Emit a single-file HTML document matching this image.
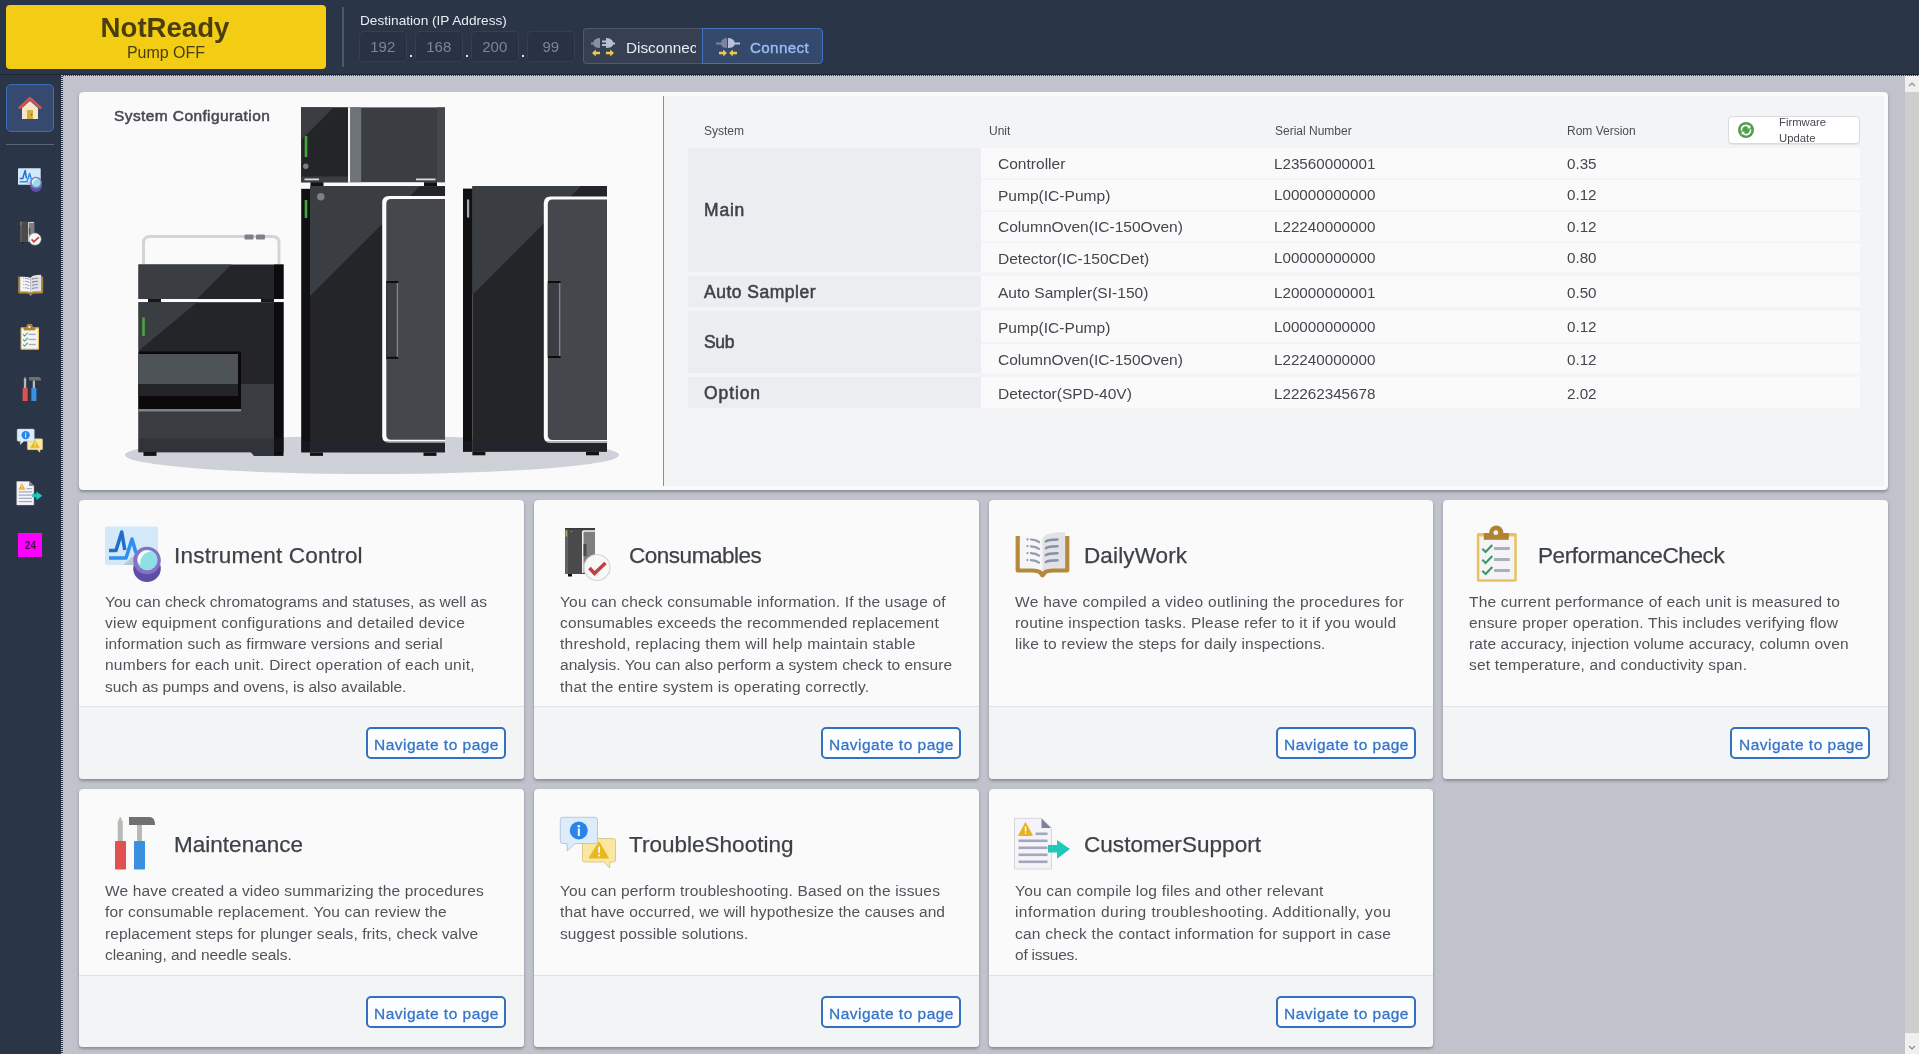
<!DOCTYPE html>
<html><head><meta charset="utf-8"><style>
*{box-sizing:border-box;margin:0;padding:0}
html,body{width:1919px;height:1054px;overflow:hidden;background:#c0c3cc;font-family:"Liberation Sans", sans-serif}
.t{position:absolute;white-space:nowrap;will-change:transform}
.b{position:absolute}
.ic{position:absolute;overflow:visible}
.card{position:absolute;background:#fafafa;border-radius:4px;box-shadow:0 0 0.5px rgba(90,95,105,.5),0 2px 3px rgba(80,85,95,.5);overflow:hidden}
.foot{position:absolute;left:0;right:0;bottom:0;background:#f3f4f6;border-top:1px solid #dfe1e5}
.nav{position:absolute;width:140px;height:32px;border:2px solid #3570c0;border-radius:5px;background:#fcfdff}
</style></head><body>
<div class="b" style="left:0;top:0;width:1919px;height:75px;background:#2a3548"></div>
<div class="b" style="left:0;top:74px;width:1919px;height:1px;background:#1c2431"></div>
<div class="b" style="left:6px;top:5px;width:320px;height:64px;background:#f2cd14;border-radius:4px"></div>
<div class="t" style="left:6px;width:320px;text-align:center;top:11.44px;font-size:27.6px;line-height:33px;font-weight:700;color:#4b3d0c;margin-left:-0.8px">NotReady</div>
<div class="t" style="left:6px;width:320px;text-align:center;top:43.21px;font-size:16px;line-height:19px;color:#4b3d0c">Pump OFF</div>
<div class="b" style="left:342px;top:7px;width:1.5px;height:60px;background:#4d586c"></div>
<div class="t " style="left:359.5px;top:13.08px;font-size:13.65px;line-height:16.38px;color:#e9edf3;font-weight:400;">Destination (IP Address)</div>
<div class="b" style="left:359px;top:31px;width:47.5px;height:31px;border:1px solid #363f51;background:#283244;border-radius:4px"></div>
<div class="t" style="left:359px;width:47.5px;text-align:center;top:38.40px;font-size:15px;line-height:18px;color:#7c8598">192</div>
<div class="b" style="left:415px;top:31px;width:47.5px;height:31px;border:1px solid #363f51;background:#283244;border-radius:4px"></div>
<div class="t" style="left:415px;width:47.5px;text-align:center;top:38.40px;font-size:15px;line-height:18px;color:#7c8598">168</div>
<div class="b" style="left:471px;top:31px;width:47.5px;height:31px;border:1px solid #363f51;background:#283244;border-radius:4px"></div>
<div class="t" style="left:471px;width:47.5px;text-align:center;top:38.40px;font-size:15px;line-height:18px;color:#7c8598">200</div>
<div class="b" style="left:527px;top:31px;width:47.5px;height:31px;border:1px solid #363f51;background:#283244;border-radius:4px"></div>
<div class="t" style="left:527px;width:47.5px;text-align:center;top:38.40px;font-size:15px;line-height:18px;color:#7c8598">99</div>
<div class="b" style="left:409.5px;top:55px;width:2.2px;height:2.2px;background:#dfe3ea"></div>
<div class="b" style="left:465.5px;top:55px;width:2.2px;height:2.2px;background:#dfe3ea"></div>
<div class="b" style="left:521.5px;top:55px;width:2.2px;height:2.2px;background:#dfe3ea"></div>
<div class="b" style="left:583px;top:28px;width:120px;height:35.5px;background:#374052;border:1px solid #4f596b;border-right:none;border-radius:4px 0 0 4px"></div>
<div class="b" style="left:702px;top:28px;width:121px;height:35.5px;background:#34496b;border:1px solid #3f73c2;border-radius:0 4px 4px 0"></div>
<div class="b" style="left:586px;top:30px;width:40px;height:32px;overflow:visible"><svg width="40" height="32" viewBox="0 0 40 32"><path d="M14 8 V18 Q8.5 18 7.3 14.5 H5 V12.5 H7.3 Q8.5 8 14 8 Z" fill="#8a90a4"/><rect x="16" y="10.5" width="4.5" height="2" fill="#b9c0d0"/><rect x="16" y="14" width="4.5" height="2" fill="#b9c0d0"/><path d="M20 8 Q26 8 27.2 12.5 H29 V14.5 H27.2 Q26 18 20 18 Z" fill="#b9c0d0"/><path d="M6 23 L9.8 19.5 V21.8 H14 V24.2 H9.8 V26.5 Z" fill="#f0c850"/><path d="M28 23 L24.2 19.5 V21.8 H20 V24.2 H24.2 V26.5 Z" fill="#f0c850"/></svg></div>
<div class="b" style="left:625.5px;top:30px;width:70px;height:30px;overflow:hidden"><div class="t " style="left:0px;top:9.02px;font-size:15.3px;line-height:18.36px;color:#e9edf4;font-weight:400;">Disconnect</div>
</div>
<div class="b" style="left:708px;top:30px;width:40px;height:32px;overflow:visible"><svg width="40" height="32" viewBox="0 0 40 32"><rect x="8" y="12.5" width="5.5" height="2" fill="#7b83a0"/><path d="M19 8 V18 Q14 18 13 14.5 V12.5 Q14 8 19 8 Z" fill="#7b83a0"/><path d="M20 8 Q25.5 8 26.8 12.5 H32 V14.5 H26.8 Q25.5 18 20 18 Z" fill="#b9c1d9"/><path d="M19 23 L15.2 19.5 V21.8 H11 V24.2 H15.2 V26.5 Z" fill="#f0c850"/><path d="M21 23 L24.8 19.5 V21.8 H29 V24.2 H24.8 V26.5 Z" fill="#f0c850"/></svg></div>
<div class="t " style="left:750px;top:39.11px;font-size:15.2px;line-height:18.24px;color:#98bef5;font-weight:400;letter-spacing:0.35px;-webkit-text-stroke:0.35px #98bef5;">Connect</div>
<div class="b" style="left:0;top:75px;width:62px;height:979px;background:#2a3548"></div>
<div class="b" style="left:61px;top:75px;width:2px;height:979px;background:repeating-linear-gradient(180deg,#c9ccd3 0 1px,#2a3548 1px 2px)"></div>
<div class="b" style="left:62px;top:75px;width:1857px;height:1px;background:repeating-linear-gradient(90deg,#c9ccd3 0 1px,#2a3548 1px 2px)"></div>
<div class="b" style="left:6px;top:84px;width:48px;height:48px;background:#354a6e;border:1px solid #3f6dbd;border-radius:5px"></div>
<svg class="ic" style="left:10px;top:90px" width="40" height="40" viewBox="0 0 40 40"><path d="M12 18 L20 11 L28 18 V29 H12 Z" fill="#f6e7c9"/>
<rect x="17" y="20" width="6" height="9" fill="#d7ae3e"/>
<circle cx="21.6" cy="24.6" r="0.7" fill="#6a5010"/>
<polyline points="9,18.5 20,8.3 31,18.5" fill="none" stroke="#d95252" stroke-width="2.8" stroke-linejoin="round"/></svg>
<div class="b" style="left:6px;top:144px;width:48px;height:1px;background:#5b6577"></div>
<svg class="ic" style="left:18px;top:167.9px" width="24" height="24" viewBox="0 0 56 56"><rect x="0" y="0.5" width="53" height="38.5" rx="1.5" fill="#d3e8f8"/>
<path d="M18 39 L31 28 L31 39 Z" fill="#b9c6d3"/>
<polyline points="4,24.5 11,24.5 16.7,6 19.8,24" fill="none" stroke="#1f6fc6" stroke-width="3.5" stroke-linejoin="round"/>
<polyline points="4,32 21,32 27,13 31,27" fill="none" stroke="#2f8ff0" stroke-width="3.5" stroke-linejoin="round"/>
<ellipse cx="42" cy="42.5" rx="13.8" ry="13.5" fill="#5d4fa6"/>
<circle cx="42" cy="34.5" r="13.8" fill="#8770c6"/>
<circle cx="42.3" cy="34" r="10.3" fill="#8fe0e6"/>
<path d="M33.3 36.5 A9.2 9.2 0 0 1 46.5 25.5 A11 11 0 0 0 35.5 38.5 Z" fill="#f4fbfc"/></svg>
<svg class="ic" style="left:18.35px;top:219.5px" width="25.8" height="25.8" viewBox="0 0 56 56"><rect x="5" y="2" width="30" height="46" fill="#4a4a4c"/>
<rect x="5" y="2" width="30" height="1.6" fill="#3a3a3c"/>
<rect x="5" y="3.6" width="3" height="44.4" fill="#626264"/>
<rect x="5.6" y="4.5" width="1.6" height="6" fill="#a8b058"/>
<circle cx="11.5" cy="5.5" r="0.8" fill="#8a8a8a"/>
<path d="M22 47 V6 Q22 4.3 23.8 4.3 H35 V47 Z" fill="#f2f2f2"/>
<path d="M23.5 47 V6.5 Q23.5 5.7 24.5 5.7 H35 V47 Z" fill="#7e7e7e"/>
<rect x="23.5" y="18" width="3" height="12" fill="#4a4a4c"/>
<rect x="8" y="48" width="4" height="2.5" fill="#111"/>
<circle cx="37" cy="41.5" r="13" fill="#f7f7f8" stroke="#d4d4d6" stroke-width="1.2"/>
<polyline points="29.5,42 34.5,47.5 45.5,37" fill="none" stroke="#c3403f" stroke-width="3.6"/></svg>
<svg class="ic" style="left:17.5px;top:271.9px" width="25.8" height="25.8" viewBox="0 0 56 56"><path d="M4.5 16.5 L4.5 46 Q4.5 48 6.5 48 L21 48 Q25.5 48 27.5 52 Q28 53 27.5 52 L22 52 Z" fill="none"/>
<path d="M1.2 10.5 H4.8 V42.5 H18 Q25 42.5 27.5 46.5 Q30 42.5 37 42.5 H50.2 V10.5 H53.8 V44.5 Q53.8 46 52.3 46 H37.5 Q31 46 29.8 49 Q28.8 51 27.5 51 Q26.2 51 25.2 49 Q24 46 17.5 46 H2.7 Q1.2 46 1.2 44.5 Z" fill="#b4893a" stroke="#b4893a" stroke-width="1.2" stroke-linejoin="round"/>
<path d="M4.8 10.5 Q17 9.5 27.5 12.5 V45 Q24 42.5 17 42.5 H4.8 Z" fill="#f6f6f8"/>
<path d="M27.5 12.5 Q30 6 50.2 6 V42.5 H38 Q31 42.5 27.5 45 Z" fill="#e1e2e6"/>
<g fill="#8a91a6"><circle cx="12.5" cy="13.3" r="1.1"/><circle cx="12.5" cy="20" r="1.1"/><circle cx="12.5" cy="27" r="1.1"/><circle cx="12.5" cy="34" r="1.1"/></g>
<g fill="none" stroke="#949cb0" stroke-width="2.2" stroke-linecap="round">
<path d="M16 13.5 Q21 13.8 24 16"/><path d="M16 20.3 Q21 20.6 24 22.8"/><path d="M16 27.2 Q21 27.5 24 29.7"/><path d="M16 34.2 Q21 34.5 24 36.7"/></g>
<g fill="none" stroke="#8890a8" stroke-width="2.4" stroke-linecap="round">
<path d="M30.8 15.5 Q33 13.5 42.5 13.5"/><path d="M30.8 22.3 Q33 20.3 42.5 20.3"/><path d="M30.8 29.2 Q33 27.2 42.5 27.2"/><path d="M30.8 36.2 Q33 34.2 42.5 34.2"/></g></svg>
<svg class="ic" style="left:17.1px;top:324.3px" width="25.8" height="25.8" viewBox="0 0 56 56"><g transform="translate(0.8,0)"><rect x="7" y="7" width="40" height="48.8" rx="1.8" fill="#e9c160"/>
<rect x="9.5" y="10.5" width="35" height="42.8" fill="#f4f4f6"/>
<circle cx="26.5" cy="6.5" r="7" fill="#b08232"/>
<rect x="14" y="7" width="25" height="6.8" fill="#b08232"/>
<circle cx="26" cy="6.7" r="2.4" fill="#f4f4f6"/>
<g fill="none" stroke="#3d9a68" stroke-width="2.2"><polyline points="12.5,22.7 15.8,26 22.5,19"/><polyline points="12.5,33.7 15.8,37 22.5,30"/><polyline points="12.5,44.7 15.8,48 22.5,41"/></g>
<g fill="#a7afbb"><rect x="24.3" y="21" width="15.7" height="3"/><rect x="24.3" y="32" width="15.7" height="3"/><rect x="24.3" y="43" width="15.7" height="3"/></g></g></svg>
<svg class="ic" style="left:17.6px;top:376.1px" width="25.8" height="25.8" viewBox="0 0 56 56"><path d="M13 26 V7 L15.2 2 L17.5 7 V26 Z" fill="#b9b9b4" stroke="#b9b9b4" stroke-width="0.6" stroke-linejoin="round"/>
<rect x="10" y="26" width="11" height="28.5" rx="0.8" fill="#e05150"/>
<path d="M24 2 H44.5 Q50 2 50 10 H24 Z" fill="#707070"/>
<rect x="32" y="10" width="5" height="16" fill="#b9b9b4"/>
<rect x="29" y="26" width="11" height="28.5" rx="0.8" fill="#3a90df"/></svg>
<svg class="ic" style="left:17.2px;top:428px" width="25.8" height="25.8" viewBox="0 0 56 56"><path d="M24.5 23.5 Q22.5 23.5 22.5 25.5 V45 Q22.5 47 24.5 47 H44 L49.5 53 L49.8 47 H53.5 Q55.5 47 55.5 45 V25.5 Q55.5 23.5 53.5 23.5 Z" fill="#fbe7a0" stroke="#d9c88f" stroke-width="1"/>
<path d="M39 27 L29 43 H48.5 Z" fill="#e8b820" stroke="#e8b820" stroke-width="1" stroke-linejoin="round"/>
<rect x="38.3" y="31.5" width="1.7" height="6.5" fill="#fff"/>
<rect x="38.3" y="39.5" width="1.7" height="1.8" fill="#fff"/>
<path d="M2.5 2.3 Q0.3 2.3 0.3 4.6 V26.2 Q0.3 28.5 2.5 28.5 H7 L7.3 36 L15 28.5 H35.2 Q37.5 28.5 37.5 26.2 V4.6 Q37.5 2.3 35.2 2.3 Z" fill="#dcecfb" stroke="#b9c9d9" stroke-width="1"/>
<circle cx="18.8" cy="15.5" r="9" fill="#2a85e8"/>
<circle cx="18.8" cy="11.3" r="1.3" fill="#fff"/>
<rect x="17.8" y="13.5" width="2" height="7.5" fill="#fff"/></svg>
<svg class="ic" style="left:17.4px;top:479.8px" width="25.8" height="25.8" viewBox="0 0 56 56"><path d="M-0.5 3.3 H26.5 L36.5 13 V54 H-0.5 Z" fill="#f4f4f8" stroke="#d6d6dc" stroke-width="1"/>
<path d="M26.5 3.5 L36 13 H26.5 Z" fill="#7b8196"/>
<path d="M10.5 7.5 L3.5 20.5 H17.5 Z" fill="#e8b020" stroke="#e8b020" stroke-width="0.8" stroke-linejoin="round"/>
<rect x="9.8" y="11.5" width="1.5" height="5" fill="#fff"/><rect x="9.8" y="17.6" width="1.5" height="1.4" fill="#fff"/>
<g fill="#a2a8ba"><rect x="20.5" y="17.5" width="12" height="2.6"/><rect x="3.5" y="24.5" width="29" height="2.6"/><rect x="3.5" y="31.5" width="29" height="2.6"/><rect x="3.5" y="38.5" width="29" height="2.6"/><rect x="3.5" y="45.5" width="29" height="2.6"/></g>
<path d="M33 30 H42 V25 L55 34 L42 43.8 V37.5 H33 Z" fill="#1fc8b8"/></svg>
<div class="b" style="left:17.6px;top:533px;width:24.8px;height:24.4px;background:#ff00ff"></div>
<div class="t" style="left:17.6px;top:538.5px;width:24.8px;text-align:center;font-size:10px;font-weight:700;line-height:14px;color:#4a0f4a">24</div>
<div class="b" style="left:1905px;top:76px;width:14px;height:978px;background:#cecece"></div>
<div class="b" style="left:1905px;top:76px;width:14px;height:16px;background:#f0f0f0"></div>
<div class="b" style="left:1905px;top:1033px;width:14px;height:21px;background:#f0f0f0"></div>
<svg class="ic" style="left:1905px;top:76px" width="14" height="16"><polyline points="4,10 7,7 10,10" fill="none" stroke="#8a8a8a" stroke-width="1.2"/></svg>
<svg class="ic" style="left:1905px;top:1033px" width="14" height="21"><polyline points="4,13 7,16 10,13" fill="none" stroke="#8a8a8a" stroke-width="1.2"/></svg>
<div class="card" style="left:79px;top:92px;width:1809px;height:398px;background:#fafafa"><div class="b" style="left:585px;top:4px;width:1220px;height:390px;background:#f3f4f6"></div><div class="b" style="left:584px;top:4px;width:1px;height:390px;background:#8b8e94"></div></div>
<div class="t " style="left:114.25px;top:106.53px;font-size:15.5px;line-height:18.6px;color:#44474e;font-weight:400;letter-spacing:0.4px;-webkit-text-stroke:0.5px #44474e;">System Configuration</div>
<svg class="ic" style="left:0;top:0" width="700" height="500" viewBox="0 0 700 500">
<ellipse cx="372" cy="455" rx="247" ry="19" fill="#cfd1d8"/>
<!-- autosampler -->
<path d="M143.5 264 V243 Q143.5 236.5 150 236.5 H272.5 Q279 236.5 279 243 V264" fill="none" stroke="#d1d5da" stroke-width="3"/>
<rect x="244.5" y="234.5" width="9" height="5" rx="1" fill="#7d8086"/>
<rect x="256" y="234.5" width="9" height="5" rx="1" fill="#7d8086"/>
<rect x="138.5" y="264.5" width="145" height="34.5" fill="#242528"/>
<path d="M138.5 264.5 H231.5 L197 299 H138.5 Z" fill="#3a3d41"/>
<rect x="274" y="264.5" width="9.5" height="34.5" fill="#0e0b0e"/>
<rect x="148" y="299" width="13" height="3.5" fill="#17181a"/>
<rect x="261" y="299" width="13" height="3.5" fill="#17181a"/>
<rect x="138.5" y="302.2" width="145" height="150" fill="#242528"/>
<path d="M138.5 302.2 H197 L138.5 351 Z" fill="#3a3d41"/>
<rect x="138.5" y="384" width="136" height="68.2" fill="#393c40"/>
<rect x="274" y="302.2" width="9.5" height="150" fill="#0e0b0e"/>
<rect x="142.2" y="317.5" width="2.6" height="18.5" fill="#46a63e"/>
<rect x="138.5" y="351.5" width="102.5" height="57.5" fill="#0c080b"/>
<rect x="138.5" y="354" width="99.5" height="30.3" fill="#4d5357"/>
<rect x="138.5" y="384.3" width="99.5" height="11.7" fill="#242528"/>
<rect x="138.5" y="409" width="102.5" height="2.5" fill="#7e8287"/>
<path d="M250.5 452 H274 V455.9 H254 Z" fill="#30343b"/>
<rect x="274" y="452" width="9.5" height="3.9" fill="#0e0b0e"/>
<rect x="138.5" y="438.5" width="145" height="13.5" fill="#1e2330" opacity="0.3"/>
<rect x="143.5" y="452" width="13" height="3.9" fill="#121316"/>
<!-- top unit -->
<rect x="301.2" y="107.4" width="143.8" height="74.8" fill="#3a3d41"/>
<path d="M301.2 107.4 H348 V182.2 H301.2 Z" fill="#242528"/>
<path d="M301.2 107.4 H333.5 L301.2 140 Z" fill="#3a3d41"/>
<rect x="301.2" y="176.5" width="46.8" height="5.7" fill="#3a3d41"/>
<rect x="348" y="107.4" width="2.4" height="74.8" fill="#f4f5f6"/>
<rect x="350.4" y="107.4" width="10.8" height="74.8" fill="#6d7378"/>
<rect x="437" y="107.4" width="8" height="74.8" fill="#44474b"/>
<rect x="304.7" y="136" width="2.6" height="21" fill="#46a63e"/>
<circle cx="305.8" cy="166.2" r="2.7" fill="#7c7f84"/>
<rect x="304.5" y="178.5" width="14.5" height="1.8" fill="#d8dadc"/>
<rect x="416" y="178.5" width="19.5" height="1.8" fill="#d8dadc"/>
<rect x="310.5" y="182.2" width="13" height="3.8" fill="#111214"/>
<rect x="424" y="182.2" width="13" height="3.8" fill="#111214"/>
<!-- middle tall unit -->
<rect x="310" y="186.2" width="135" height="266.2" fill="#242528"/>
<path d="M310 186.2 H420 L310 296 Z" fill="#3a3d41"/>
<path d="M420 186.2 H445 V194 H412 Z" fill="#242528"/>
<rect x="301.2" y="188.8" width="8.8" height="263.6" fill="#111113"/>
<rect x="304.7" y="200" width="2.6" height="18" fill="#46a63e"/>
<circle cx="320.8" cy="196.8" r="3.8" fill="#7c7f84"/>
<path d="M445 196 H389 Q382.2 196 382.2 202.8 V436 Q382.2 442.7 389 442.7 H445 Z" fill="#fbfbfb"/>
<path d="M445 199 H391 Q386.3 199 386.3 203.7 V435 Q386.3 439.7 391 439.7 H445 Z" fill="#45474c"/>
<rect x="386.3" y="281" width="12" height="77.8" fill="#0d0d0f"/>
<rect x="386.3" y="283" width="10.2" height="73.8" fill="#3a3d41"/>
<rect x="396.5" y="283" width="1.8" height="73.8" fill="#7f8286"/>
<rect x="301.2" y="441" width="143.8" height="11.4" fill="#1e2330" opacity="0.35"/>
<rect x="310" y="452.4" width="13" height="3.5" fill="#111214"/>
<rect x="423.5" y="452.4" width="13" height="3.5" fill="#111214"/>
<!-- right unit -->
<rect x="472.4" y="186" width="134.6" height="265.8" fill="#242528"/>
<path d="M472.4 186 H581 L472.4 295 Z" fill="#3a3d41"/>
<rect x="463" y="188.6" width="9.4" height="263.2" fill="#111113"/>
<rect x="467" y="199.5" width="2.2" height="18" fill="#a6a9ad"/>
<path d="M607 196.5 H550.5 Q543.8 196.5 543.8 203.3 V436.2 Q543.8 443 550.5 443 H607 Z" fill="#fbfbfb"/>
<path d="M607 199.5 H552.5 Q547.8 199.5 547.8 204.2 V435.3 Q547.8 440 552.5 440 H607 Z" fill="#45474c"/>
<rect x="547.8" y="281" width="12.8" height="77" fill="#0d0d0f"/>
<rect x="547.8" y="283" width="11" height="73" fill="#3a3d41"/>
<rect x="558.8" y="283" width="1.8" height="73" fill="#7f8286"/>
<rect x="463" y="441" width="144" height="10.8" fill="#1e2330" opacity="0.35"/>
<rect x="472.4" y="451.8" width="13" height="3.5" fill="#111214"/>
<rect x="586" y="451.8" width="13" height="3.5" fill="#111214"/>
</svg>
<div class="t " style="left:704px;top:124.24px;font-size:12px;line-height:14.4px;color:#4a4d54;font-weight:400;">System</div>
<div class="t " style="left:989.2px;top:124.24px;font-size:12px;line-height:14.4px;color:#4a4d54;font-weight:400;">Unit</div>
<div class="t " style="left:1274.5px;top:124.24px;font-size:12px;line-height:14.4px;color:#4a4d54;font-weight:400;">Serial Number</div>
<div class="t " style="left:1567px;top:124.24px;font-size:12px;line-height:14.4px;color:#4a4d54;font-weight:400;">Rom Version</div>
<div class="b" style="left:688px;top:148px;width:293px;height:124px;background:#ecedf0"></div>
<div class="t " style="left:704.3px;top:200.44px;font-size:17.5px;line-height:21.0px;color:#3f4249;font-weight:400;letter-spacing:0.8px;-webkit-text-stroke:0.55px #3f4249;">Main</div>
<div class="b" style="left:688px;top:276px;width:293px;height:31px;background:#ecedf0"></div>
<div class="t " style="left:704.3px;top:282.04px;font-size:17.5px;line-height:21.0px;color:#3f4249;font-weight:400;letter-spacing:0.5px;-webkit-text-stroke:0.55px #3f4249;">Auto Sampler</div>
<div class="b" style="left:688px;top:311px;width:293px;height:61.5px;background:#ecedf0"></div>
<div class="t " style="left:704.3px;top:332.04px;font-size:17.5px;line-height:21.0px;color:#3f4249;font-weight:400;letter-spacing:-0.3px;-webkit-text-stroke:0.55px #3f4249;">Sub</div>
<div class="b" style="left:688px;top:377px;width:293px;height:31px;background:#ecedf0"></div>
<div class="t " style="left:704.3px;top:383.44px;font-size:17.5px;line-height:21.0px;color:#3f4249;font-weight:400;letter-spacing:0.9px;-webkit-text-stroke:0.55px #3f4249;">Option</div>
<div class="b" style="left:981px;top:148px;width:879px;height:30px;background:#fafafa"></div>
<div class="t " style="left:997.5px;top:155.28px;font-size:15.55px;line-height:18.66px;color:#43464d;font-weight:400;">Controller</div>
<div class="t " style="left:1274px;top:154.61px;font-size:15.2px;line-height:18.24px;color:#43464d;font-weight:400;">L23560000001</div>
<div class="t " style="left:1567px;top:154.61px;font-size:15.2px;line-height:18.24px;color:#43464d;font-weight:400;">0.35</div>
<div class="b" style="left:981px;top:180px;width:879px;height:29.5px;background:#fafafa"></div>
<div class="t " style="left:997.5px;top:186.68px;font-size:15.55px;line-height:18.66px;color:#43464d;font-weight:400;">Pump(IC-Pump)</div>
<div class="t " style="left:1274px;top:186.01px;font-size:15.2px;line-height:18.24px;color:#43464d;font-weight:400;">L00000000000</div>
<div class="t " style="left:1567px;top:186.01px;font-size:15.2px;line-height:18.24px;color:#43464d;font-weight:400;">0.12</div>
<div class="b" style="left:981px;top:211.5px;width:879px;height:29.5px;background:#fafafa"></div>
<div class="t " style="left:997.5px;top:218.18px;font-size:15.55px;line-height:18.66px;color:#43464d;font-weight:400;">ColumnOven(IC-150Oven)</div>
<div class="t " style="left:1274px;top:217.51px;font-size:15.2px;line-height:18.24px;color:#43464d;font-weight:400;">L22240000000</div>
<div class="t " style="left:1567px;top:217.51px;font-size:15.2px;line-height:18.24px;color:#43464d;font-weight:400;">0.12</div>
<div class="b" style="left:981px;top:243px;width:879px;height:29px;background:#fafafa"></div>
<div class="t " style="left:997.5px;top:249.58px;font-size:15.55px;line-height:18.66px;color:#43464d;font-weight:400;">Detector(IC-150CDet)</div>
<div class="t " style="left:1274px;top:248.91px;font-size:15.2px;line-height:18.24px;color:#43464d;font-weight:400;">L00000000000</div>
<div class="t " style="left:1567px;top:248.91px;font-size:15.2px;line-height:18.24px;color:#43464d;font-weight:400;">0.80</div>
<div class="b" style="left:981px;top:276px;width:879px;height:31px;background:#fafafa"></div>
<div class="t " style="left:997.5px;top:283.88px;font-size:15.55px;line-height:18.66px;color:#43464d;font-weight:400;">Auto Sampler(SI-150)</div>
<div class="t " style="left:1274px;top:283.91px;font-size:15.2px;line-height:18.24px;color:#43464d;font-weight:400;">L20000000001</div>
<div class="t " style="left:1567px;top:283.91px;font-size:15.2px;line-height:18.24px;color:#43464d;font-weight:400;">0.50</div>
<div class="b" style="left:981px;top:311px;width:879px;height:31px;background:#fafafa"></div>
<div class="t " style="left:997.5px;top:318.88px;font-size:15.55px;line-height:18.66px;color:#43464d;font-weight:400;">Pump(IC-Pump)</div>
<div class="t " style="left:1274px;top:318.21px;font-size:15.2px;line-height:18.24px;color:#43464d;font-weight:400;">L00000000000</div>
<div class="t " style="left:1567px;top:318.21px;font-size:15.2px;line-height:18.24px;color:#43464d;font-weight:400;">0.12</div>
<div class="b" style="left:981px;top:344px;width:879px;height:28.5px;background:#fafafa"></div>
<div class="t " style="left:997.5px;top:351.18px;font-size:15.55px;line-height:18.66px;color:#43464d;font-weight:400;">ColumnOven(IC-150Oven)</div>
<div class="t " style="left:1274px;top:350.51px;font-size:15.2px;line-height:18.24px;color:#43464d;font-weight:400;">L22240000000</div>
<div class="t " style="left:1567px;top:350.51px;font-size:15.2px;line-height:18.24px;color:#43464d;font-weight:400;">0.12</div>
<div class="b" style="left:981px;top:377px;width:879px;height:31px;background:#fafafa"></div>
<div class="t " style="left:997.5px;top:384.78px;font-size:15.55px;line-height:18.66px;color:#43464d;font-weight:400;">Detector(SPD-40V)</div>
<div class="t " style="left:1274px;top:385.31px;font-size:15.2px;line-height:18.24px;color:#43464d;font-weight:400;">L22262345678</div>
<div class="t " style="left:1567px;top:385.31px;font-size:15.2px;line-height:18.24px;color:#43464d;font-weight:400;">2.02</div>
<div class="b" style="left:1728px;top:116px;width:131.5px;height:28px;background:#fff;border:1px solid #d9dbe0;border-radius:4px;box-shadow:0 1px 1px rgba(0,0,0,.06)"></div>
<svg class="ic" style="left:1738px;top:122px" width="16" height="16" viewBox="0 0 16 16"><circle cx="8" cy="8" r="8" fill="#4ea04a"/><path d="M3.6 8.6 A4.4 4.4 0 0 1 11.3 5" fill="none" stroke="#fff" stroke-width="1.6"/><path d="M12.4 3 L12.4 6.6 L8.9 6.2 Z" fill="#fff"/><path d="M12.4 7.4 A4.4 4.4 0 0 1 4.7 11" fill="none" stroke="#fff" stroke-width="1.6"/><path d="M3.6 13 L3.6 9.4 L7.1 9.8 Z" fill="#fff"/></svg>
<div class="b" style="left:1729px;top:117px;width:130px;height:26.5px;overflow:hidden"><div class="t " style="left:50.299999999999955px;top:-0.90px;font-size:11.3px;line-height:13.56px;color:#45484f;font-weight:400;">Firmware</div>
<div class="t " style="left:50.299999999999955px;top:14.80px;font-size:11.3px;line-height:13.56px;color:#45484f;font-weight:400;">Update</div>
</div>
<div class="card" style="left:79.0px;top:500px;width:444.75px;height:279px"><div class="foot" style="top:206.3px"></div></div>
<svg class="ic" style="left:105.0px;top:526px" width="56" height="56" viewBox="0 0 56 56"><rect x="0" y="0.5" width="53" height="38.5" rx="1.5" fill="#d3e8f8"/>
<path d="M18 39 L31 28 L31 39 Z" fill="#b9c6d3"/>
<polyline points="4,24.5 11,24.5 16.7,6 19.8,24" fill="none" stroke="#1f6fc6" stroke-width="3.5" stroke-linejoin="round"/>
<polyline points="4,32 21,32 27,13 31,27" fill="none" stroke="#2f8ff0" stroke-width="3.5" stroke-linejoin="round"/>
<ellipse cx="42" cy="42.5" rx="13.8" ry="13.5" fill="#5d4fa6"/>
<circle cx="42" cy="34.5" r="13.8" fill="#8770c6"/>
<circle cx="42.3" cy="34" r="10.3" fill="#8fe0e6"/>
<path d="M33.3 36.5 A9.2 9.2 0 0 1 46.5 25.5 A11 11 0 0 0 35.5 38.5 Z" fill="#f4fbfc"/></svg>
<div class="t " style="left:174.0px;top:541.70px;font-size:22.5px;line-height:27.0px;color:#3d4148;font-weight:400;letter-spacing:0.207px;-webkit-text-stroke:0.25px #3d4148;">Instrument Control</div>
<div class="t " style="left:105.0px;top:592.73px;font-size:15.5px;line-height:18.6px;color:#505359;font-weight:400;letter-spacing:0.017px;">You can check chromatograms and statuses, as well as</div>
<div class="t " style="left:105.0px;top:613.98px;font-size:15.5px;line-height:18.6px;color:#505359;font-weight:400;letter-spacing:0.281px;">view equipment configurations and detailed device</div>
<div class="t " style="left:105.0px;top:635.23px;font-size:15.5px;line-height:18.6px;color:#505359;font-weight:400;letter-spacing:0.126px;">information such as firmware versions and serial</div>
<div class="t " style="left:105.0px;top:656.48px;font-size:15.5px;line-height:18.6px;color:#505359;font-weight:400;letter-spacing:0.246px;">numbers for each unit. Direct operation of each unit,</div>
<div class="t " style="left:105.0px;top:677.73px;font-size:15.5px;line-height:18.6px;color:#505359;font-weight:400;letter-spacing:-0.025px;">such as pumps and ovens, is also available.</div>
<div class="nav" style="left:366.05px;top:727px"></div>
<div class="t " style="left:374.35px;top:736.03px;font-size:15.5px;line-height:18.6px;color:#3574c6;font-weight:400;letter-spacing:0.486px;-webkit-text-stroke:0.3px #3574c6;">Navigate to page</div>
<div class="card" style="left:533.75px;top:500px;width:444.75px;height:279px"><div class="foot" style="top:206.3px"></div></div>
<svg class="ic" style="left:559.75px;top:526px" width="56" height="56" viewBox="0 0 56 56"><rect x="5" y="2" width="30" height="46" fill="#4a4a4c"/>
<rect x="5" y="2" width="30" height="1.6" fill="#3a3a3c"/>
<rect x="5" y="3.6" width="3" height="44.4" fill="#626264"/>
<rect x="5.6" y="4.5" width="1.6" height="6" fill="#a8b058"/>
<circle cx="11.5" cy="5.5" r="0.8" fill="#8a8a8a"/>
<path d="M22 47 V6 Q22 4.3 23.8 4.3 H35 V47 Z" fill="#f2f2f2"/>
<path d="M23.5 47 V6.5 Q23.5 5.7 24.5 5.7 H35 V47 Z" fill="#7e7e7e"/>
<rect x="23.5" y="18" width="3" height="12" fill="#4a4a4c"/>
<rect x="8" y="48" width="4" height="2.5" fill="#111"/>
<circle cx="37" cy="41.5" r="13" fill="#f7f7f8" stroke="#d4d4d6" stroke-width="1.2"/>
<polyline points="29.5,42 34.5,47.5 45.5,37" fill="none" stroke="#c3403f" stroke-width="3.6"/></svg>
<div class="t " style="left:628.75px;top:541.70px;font-size:22.5px;line-height:27.0px;color:#3d4148;font-weight:400;letter-spacing:-0.478px;-webkit-text-stroke:0.25px #3d4148;">Consumables</div>
<div class="t " style="left:559.75px;top:592.73px;font-size:15.5px;line-height:18.6px;color:#505359;font-weight:400;letter-spacing:0.185px;">You can check consumable information. If the usage of</div>
<div class="t " style="left:559.75px;top:613.98px;font-size:15.5px;line-height:18.6px;color:#505359;font-weight:400;letter-spacing:0.141px;">consumables exceeds the recommended replacement</div>
<div class="t " style="left:559.75px;top:635.23px;font-size:15.5px;line-height:18.6px;color:#505359;font-weight:400;letter-spacing:0.265px;">threshold, replacing them will help maintain stable</div>
<div class="t " style="left:559.75px;top:656.48px;font-size:15.5px;line-height:18.6px;color:#505359;font-weight:400;letter-spacing:0.032px;">analysis. You can also perform a system check to ensure</div>
<div class="t " style="left:559.75px;top:677.73px;font-size:15.5px;line-height:18.6px;color:#505359;font-weight:400;letter-spacing:0.232px;">that the entire system is operating correctly.</div>
<div class="nav" style="left:820.8px;top:727px"></div>
<div class="t " style="left:829.0999999999999px;top:736.03px;font-size:15.5px;line-height:18.6px;color:#3574c6;font-weight:400;letter-spacing:0.486px;-webkit-text-stroke:0.3px #3574c6;">Navigate to page</div>
<div class="card" style="left:988.5px;top:500px;width:444.75px;height:279px"><div class="foot" style="top:206.3px"></div></div>
<svg class="ic" style="left:1014.5px;top:526px" width="56" height="56" viewBox="0 0 56 56"><path d="M4.5 16.5 L4.5 46 Q4.5 48 6.5 48 L21 48 Q25.5 48 27.5 52 Q28 53 27.5 52 L22 52 Z" fill="none"/>
<path d="M1.2 10.5 H4.8 V42.5 H18 Q25 42.5 27.5 46.5 Q30 42.5 37 42.5 H50.2 V10.5 H53.8 V44.5 Q53.8 46 52.3 46 H37.5 Q31 46 29.8 49 Q28.8 51 27.5 51 Q26.2 51 25.2 49 Q24 46 17.5 46 H2.7 Q1.2 46 1.2 44.5 Z" fill="#b4893a" stroke="#b4893a" stroke-width="1.2" stroke-linejoin="round"/>
<path d="M4.8 10.5 Q17 9.5 27.5 12.5 V45 Q24 42.5 17 42.5 H4.8 Z" fill="#f6f6f8"/>
<path d="M27.5 12.5 Q30 6 50.2 6 V42.5 H38 Q31 42.5 27.5 45 Z" fill="#e1e2e6"/>
<g fill="#8a91a6"><circle cx="12.5" cy="13.3" r="1.1"/><circle cx="12.5" cy="20" r="1.1"/><circle cx="12.5" cy="27" r="1.1"/><circle cx="12.5" cy="34" r="1.1"/></g>
<g fill="none" stroke="#949cb0" stroke-width="2.2" stroke-linecap="round">
<path d="M16 13.5 Q21 13.8 24 16"/><path d="M16 20.3 Q21 20.6 24 22.8"/><path d="M16 27.2 Q21 27.5 24 29.7"/><path d="M16 34.2 Q21 34.5 24 36.7"/></g>
<g fill="none" stroke="#8890a8" stroke-width="2.4" stroke-linecap="round">
<path d="M30.8 15.5 Q33 13.5 42.5 13.5"/><path d="M30.8 22.3 Q33 20.3 42.5 20.3"/><path d="M30.8 29.2 Q33 27.2 42.5 27.2"/><path d="M30.8 36.2 Q33 34.2 42.5 34.2"/></g></svg>
<div class="t " style="left:1083.5px;top:541.70px;font-size:22.5px;line-height:27.0px;color:#3d4148;font-weight:400;letter-spacing:0.124px;-webkit-text-stroke:0.25px #3d4148;">DailyWork</div>
<div class="t " style="left:1014.5px;top:592.73px;font-size:15.5px;line-height:18.6px;color:#505359;font-weight:400;letter-spacing:0.287px;">We have compiled a video outlining the procedures for</div>
<div class="t " style="left:1014.5px;top:613.98px;font-size:15.5px;line-height:18.6px;color:#505359;font-weight:400;letter-spacing:0.205px;">routine inspection tasks. Please refer to it if you would</div>
<div class="t " style="left:1014.5px;top:635.23px;font-size:15.5px;line-height:18.6px;color:#505359;font-weight:400;letter-spacing:0.193px;">like to review the steps for daily inspections.</div>
<div class="nav" style="left:1275.55px;top:727px"></div>
<div class="t " style="left:1283.85px;top:736.03px;font-size:15.5px;line-height:18.6px;color:#3574c6;font-weight:400;letter-spacing:0.486px;-webkit-text-stroke:0.3px #3574c6;">Navigate to page</div>
<div class="card" style="left:1443.25px;top:500px;width:444.75px;height:279px"><div class="foot" style="top:206.3px"></div></div>
<svg class="ic" style="left:1469.25px;top:526px" width="56" height="56" viewBox="0 0 56 56"><g transform="translate(0.8,0)"><rect x="7" y="7" width="40" height="48.8" rx="1.8" fill="#e9c160"/>
<rect x="9.5" y="10.5" width="35" height="42.8" fill="#f4f4f6"/>
<circle cx="26.5" cy="6.5" r="7" fill="#b08232"/>
<rect x="14" y="7" width="25" height="6.8" fill="#b08232"/>
<circle cx="26" cy="6.7" r="2.4" fill="#f4f4f6"/>
<g fill="none" stroke="#3d9a68" stroke-width="2.2"><polyline points="12.5,22.7 15.8,26 22.5,19"/><polyline points="12.5,33.7 15.8,37 22.5,30"/><polyline points="12.5,44.7 15.8,48 22.5,41"/></g>
<g fill="#a7afbb"><rect x="24.3" y="21" width="15.7" height="3"/><rect x="24.3" y="32" width="15.7" height="3"/><rect x="24.3" y="43" width="15.7" height="3"/></g></g></svg>
<div class="t " style="left:1538.25px;top:541.70px;font-size:22.5px;line-height:27.0px;color:#3d4148;font-weight:400;letter-spacing:-0.393px;-webkit-text-stroke:0.25px #3d4148;">PerformanceCheck</div>
<div class="t " style="left:1469.25px;top:592.73px;font-size:15.5px;line-height:18.6px;color:#505359;font-weight:400;letter-spacing:0.2px;">The current performance of each unit is measured to</div>
<div class="t " style="left:1469.25px;top:613.98px;font-size:15.5px;line-height:18.6px;color:#505359;font-weight:400;letter-spacing:0.207px;">ensure proper operation. This includes verifying flow</div>
<div class="t " style="left:1469.25px;top:635.23px;font-size:15.5px;line-height:18.6px;color:#505359;font-weight:400;letter-spacing:0.119px;">rate accuracy, injection volume accuracy, column oven</div>
<div class="t " style="left:1469.25px;top:656.48px;font-size:15.5px;line-height:18.6px;color:#505359;font-weight:400;letter-spacing:0.196px;">set temperature, and conductivity span.</div>
<div class="nav" style="left:1730.3px;top:727px"></div>
<div class="t " style="left:1738.6px;top:736.03px;font-size:15.5px;line-height:18.6px;color:#3574c6;font-weight:400;letter-spacing:0.486px;-webkit-text-stroke:0.3px #3574c6;">Navigate to page</div>
<div class="card" style="left:79.0px;top:789.3px;width:444.75px;height:258.2px"><div class="foot" style="top:185.7px"></div></div>
<svg class="ic" style="left:105.0px;top:815.3px" width="56" height="56" viewBox="0 0 56 56"><path d="M13 26 V7 L15.2 2 L17.5 7 V26 Z" fill="#b9b9b4" stroke="#b9b9b4" stroke-width="0.6" stroke-linejoin="round"/>
<rect x="10" y="26" width="11" height="28.5" rx="0.8" fill="#e05150"/>
<path d="M24 2 H44.5 Q50 2 50 10 H24 Z" fill="#707070"/>
<rect x="32" y="10" width="5" height="16" fill="#b9b9b4"/>
<rect x="29" y="26" width="11" height="28.5" rx="0.8" fill="#3a90df"/></svg>
<div class="t " style="left:174.0px;top:831.00px;font-size:22.5px;line-height:27.0px;color:#3d4148;font-weight:400;letter-spacing:0.016px;-webkit-text-stroke:0.25px #3d4148;">Maintenance</div>
<div class="t " style="left:105.0px;top:882.03px;font-size:15.5px;line-height:18.6px;color:#505359;font-weight:400;letter-spacing:0.156px;">We have created a video summarizing the procedures</div>
<div class="t " style="left:105.0px;top:903.28px;font-size:15.5px;line-height:18.6px;color:#505359;font-weight:400;letter-spacing:0.162px;">for consumable replacement. You can review the</div>
<div class="t " style="left:105.0px;top:924.53px;font-size:15.5px;line-height:18.6px;color:#505359;font-weight:400;letter-spacing:0.083px;">replacement steps for plunger seals, frits, check valve</div>
<div class="t " style="left:105.0px;top:945.78px;font-size:15.5px;line-height:18.6px;color:#505359;font-weight:400;letter-spacing:-0.045px;">cleaning, and needle seals.</div>
<div class="nav" style="left:366.05px;top:996.0px"></div>
<div class="t " style="left:374.35px;top:1005.03px;font-size:15.5px;line-height:18.6px;color:#3574c6;font-weight:400;letter-spacing:0.486px;-webkit-text-stroke:0.3px #3574c6;">Navigate to page</div>
<div class="card" style="left:533.75px;top:789.3px;width:444.75px;height:258.2px"><div class="foot" style="top:185.7px"></div></div>
<svg class="ic" style="left:559.75px;top:815.3px" width="56" height="56" viewBox="0 0 56 56"><path d="M24.5 23.5 Q22.5 23.5 22.5 25.5 V45 Q22.5 47 24.5 47 H44 L49.5 53 L49.8 47 H53.5 Q55.5 47 55.5 45 V25.5 Q55.5 23.5 53.5 23.5 Z" fill="#fbe7a0" stroke="#d9c88f" stroke-width="1"/>
<path d="M39 27 L29 43 H48.5 Z" fill="#e8b820" stroke="#e8b820" stroke-width="1" stroke-linejoin="round"/>
<rect x="38.3" y="31.5" width="1.7" height="6.5" fill="#fff"/>
<rect x="38.3" y="39.5" width="1.7" height="1.8" fill="#fff"/>
<path d="M2.5 2.3 Q0.3 2.3 0.3 4.6 V26.2 Q0.3 28.5 2.5 28.5 H7 L7.3 36 L15 28.5 H35.2 Q37.5 28.5 37.5 26.2 V4.6 Q37.5 2.3 35.2 2.3 Z" fill="#dcecfb" stroke="#b9c9d9" stroke-width="1"/>
<circle cx="18.8" cy="15.5" r="9" fill="#2a85e8"/>
<circle cx="18.8" cy="11.3" r="1.3" fill="#fff"/>
<rect x="17.8" y="13.5" width="2" height="7.5" fill="#fff"/></svg>
<div class="t " style="left:628.75px;top:831.00px;font-size:22.5px;line-height:27.0px;color:#3d4148;font-weight:400;letter-spacing:0.016px;-webkit-text-stroke:0.25px #3d4148;">TroubleShooting</div>
<div class="t " style="left:559.75px;top:882.03px;font-size:15.5px;line-height:18.6px;color:#505359;font-weight:400;letter-spacing:0.161px;">You can perform troubleshooting. Based on the issues</div>
<div class="t " style="left:559.75px;top:903.28px;font-size:15.5px;line-height:18.6px;color:#505359;font-weight:400;letter-spacing:0.111px;">that have occurred, we will hypothesize the causes and</div>
<div class="t " style="left:559.75px;top:924.53px;font-size:15.5px;line-height:18.6px;color:#505359;font-weight:400;letter-spacing:0.117px;">suggest possible solutions.</div>
<div class="nav" style="left:820.8px;top:996.0px"></div>
<div class="t " style="left:829.0999999999999px;top:1005.03px;font-size:15.5px;line-height:18.6px;color:#3574c6;font-weight:400;letter-spacing:0.486px;-webkit-text-stroke:0.3px #3574c6;">Navigate to page</div>
<div class="card" style="left:988.5px;top:789.3px;width:444.75px;height:258.2px"><div class="foot" style="top:185.7px"></div></div>
<svg class="ic" style="left:1014.5px;top:815.3px" width="56" height="56" viewBox="0 0 56 56"><path d="M-0.5 3.3 H26.5 L36.5 13 V54 H-0.5 Z" fill="#f4f4f8" stroke="#d6d6dc" stroke-width="1"/>
<path d="M26.5 3.5 L36 13 H26.5 Z" fill="#7b8196"/>
<path d="M10.5 7.5 L3.5 20.5 H17.5 Z" fill="#e8b020" stroke="#e8b020" stroke-width="0.8" stroke-linejoin="round"/>
<rect x="9.8" y="11.5" width="1.5" height="5" fill="#fff"/><rect x="9.8" y="17.6" width="1.5" height="1.4" fill="#fff"/>
<g fill="#a2a8ba"><rect x="20.5" y="17.5" width="12" height="2.6"/><rect x="3.5" y="24.5" width="29" height="2.6"/><rect x="3.5" y="31.5" width="29" height="2.6"/><rect x="3.5" y="38.5" width="29" height="2.6"/><rect x="3.5" y="45.5" width="29" height="2.6"/></g>
<path d="M33 30 H42 V25 L55 34 L42 43.8 V37.5 H33 Z" fill="#1fc8b8"/></svg>
<div class="t " style="left:1083.5px;top:831.00px;font-size:22.5px;line-height:27.0px;color:#3d4148;font-weight:400;letter-spacing:0.047px;-webkit-text-stroke:0.25px #3d4148;">CustomerSupport</div>
<div class="t " style="left:1014.5px;top:882.03px;font-size:15.5px;line-height:18.6px;color:#505359;font-weight:400;letter-spacing:0.212px;">You can compile log files and other relevant</div>
<div class="t " style="left:1014.5px;top:903.28px;font-size:15.5px;line-height:18.6px;color:#505359;font-weight:400;letter-spacing:0.422px;">information during troubleshooting. Additionally, you</div>
<div class="t " style="left:1014.5px;top:924.53px;font-size:15.5px;line-height:18.6px;color:#505359;font-weight:400;letter-spacing:0.251px;">can check the contact information for support in case</div>
<div class="t " style="left:1014.5px;top:945.78px;font-size:15.5px;line-height:18.6px;color:#505359;font-weight:400;letter-spacing:-0.232px;">of issues.</div>
<div class="nav" style="left:1275.55px;top:996.0px"></div>
<div class="t " style="left:1283.85px;top:1005.03px;font-size:15.5px;line-height:18.6px;color:#3574c6;font-weight:400;letter-spacing:0.486px;-webkit-text-stroke:0.3px #3574c6;">Navigate to page</div>
</body></html>
